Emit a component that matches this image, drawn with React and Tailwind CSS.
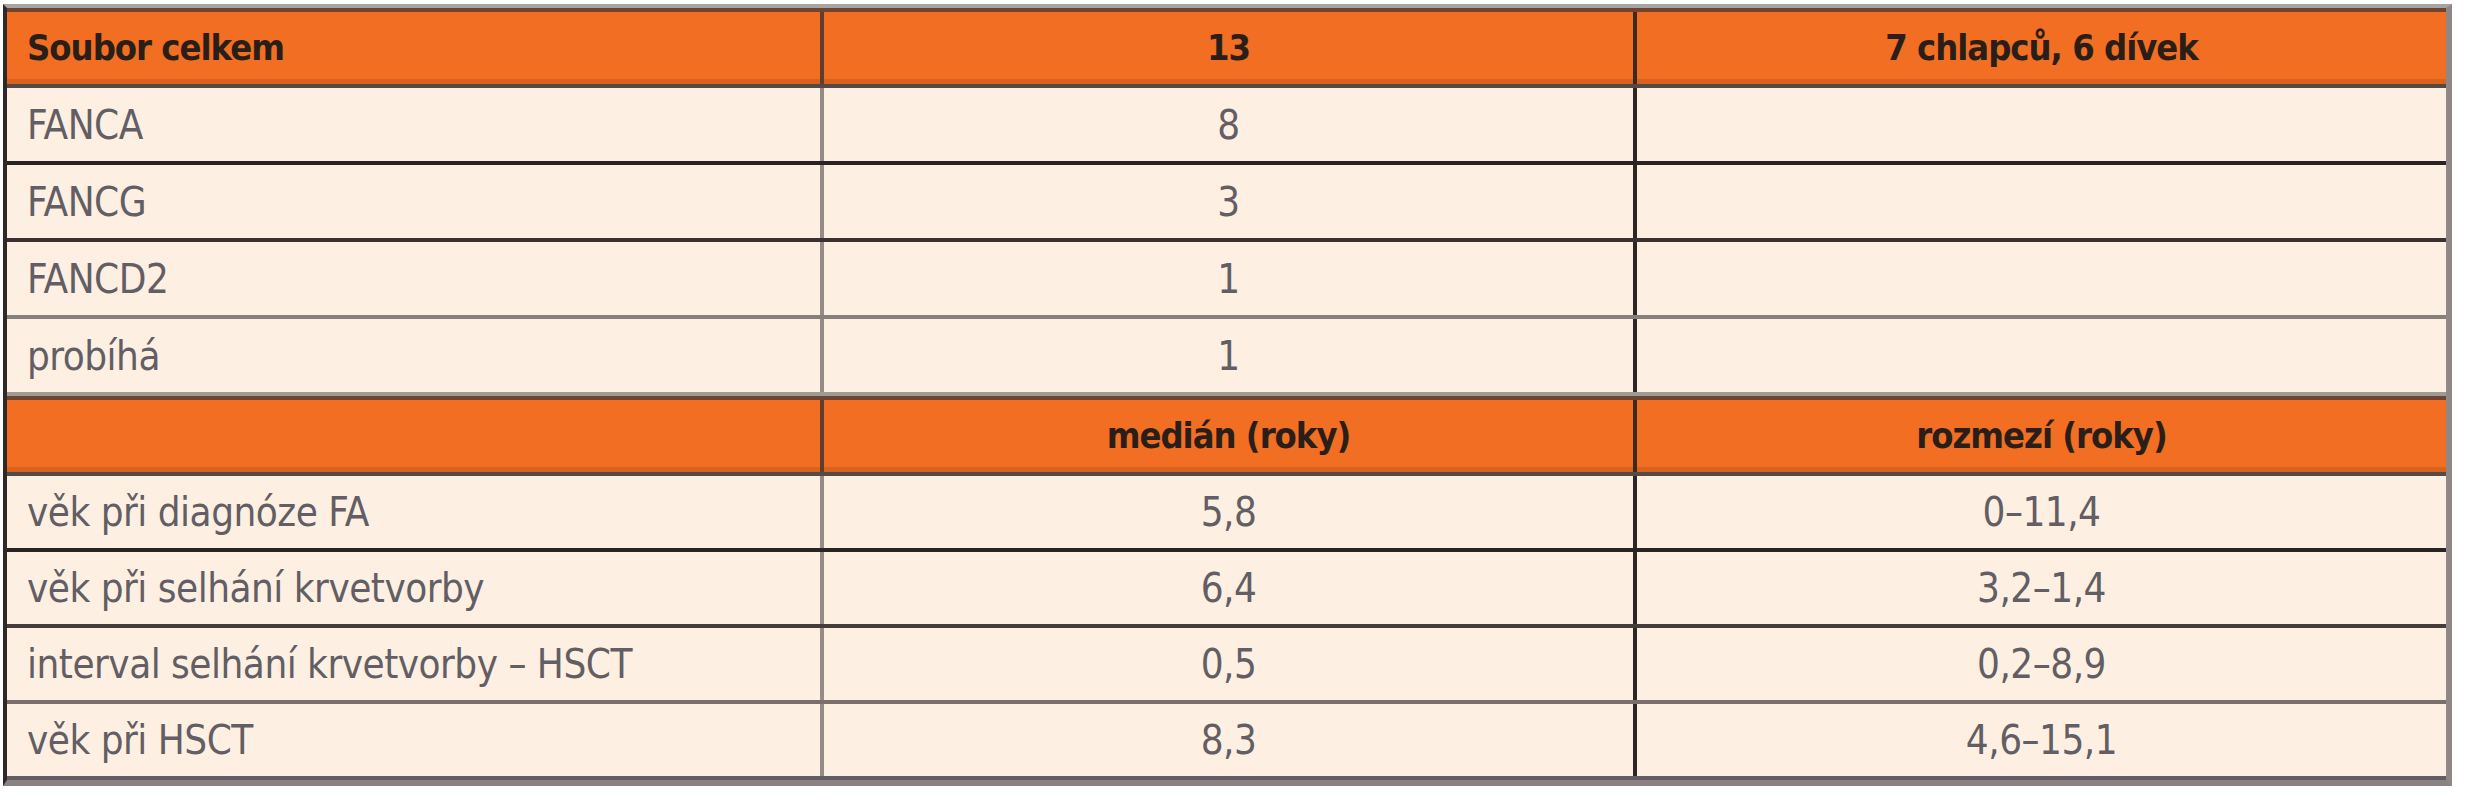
const FONT = { fontFamily: '"DejaVu Sans Condensed", "Liberation Sans Narrow", "Roboto", sans-serif' };

const ROWS = [
    { head: true, h: 'h-[80px]', cells: ['Soubor celkem', '13', '7 chlapců, 6 dívek'], line: 'border-b-[#564944]' },
    { h: 'h-[77px]', cells: ['FANCA', '8', ''], line: 'border-b-[#2a2323]' },
    { h: 'h-[77px]', cells: ['FANCG', '3', ''], line: 'border-b-[#3a3232]' },
    { h: 'h-[77px]', cells: ['FANCD2', '1', ''], line: 'border-b-[#86807c]' },
    { h: 'h-[77px]', cells: ['probíhá', '1', ''], line: 'border-b-[#a09a96]' },
    { head: true, h: 'h-[80px]', cells: ['', 'medián (roky)', 'rozmezí (roky)'], line: 'border-b-[#554a44]' },
    { h: 'h-[76px]', cells: ['věk při diagnóze FA', '5,8', '0–11,4'], line: 'border-b-[#2a2323]' },
    { h: 'h-[76px]', cells: ['věk při selhání krvetvorby', '6,4', '3,2–1,4'], line: 'border-b-[#463d3b]' },
    { h: 'h-[76px]', cells: ['interval selhání krvetvorby – HSCT', '0,5', '0,2–8,9'], line: 'border-b-[#7a6f6b]' },
    { h: 'h-[76px]', cells: ['věk při HSCT', '8,3', '4,6–15,1'], line: 'border-b-0' },
];

function Row({ row }) {
    const base = row.head
        ? 'bg-[#f26e22] border-t-4 border-t-[#6e4530] shadow-[inset_0_-5px_0_#d8631f] text-[#2a1f18] font-bold text-[36px] tracking-[-1px]'
        : 'bg-[#fdf0e3] text-[#625e63] text-[40px] tracking-[-0.5px]';
    return (
        <div className={`grid grid-cols-3 border-b-4 ${row.h} ${row.line} ${base}`}>
            {row.cells.map((c, i) => (
                <div
                    key={i}
                    className={`flex items-center leading-none ${
                        i === 0 ? 'pl-5' : 'justify-center'
                    } ${i === 1 ? (row.head ? 'border-l-4 border-l-[#5e3e2c]' : 'border-l-4 border-l-[#958c88]') : ''} ${
                        i === 2 ? (row.head ? 'border-l-4 border-l-[#3a2a22]' : 'border-l-4 border-l-[#2d2625]') : ''
                    }`}
                >
                    {c}
                </div>
            ))}
        </div>
    );
}

export default function App() {
    return (
        <div className="bg-white w-[2465px] h-[800px] pt-1 pl-[3px]" style={FONT}>
            <div className="w-[2449px] border-t-4 border-t-[#a9a4a2] border-l-4 border-l-[#2e2828] border-r-[6px] border-r-[#8f8886] border-b-[6px] border-b-[#8a8180]">
                {ROWS.map((r, i) => (
                    <Row key={i} row={r} />
                ))}
            </div>
        </div>
    );
}
